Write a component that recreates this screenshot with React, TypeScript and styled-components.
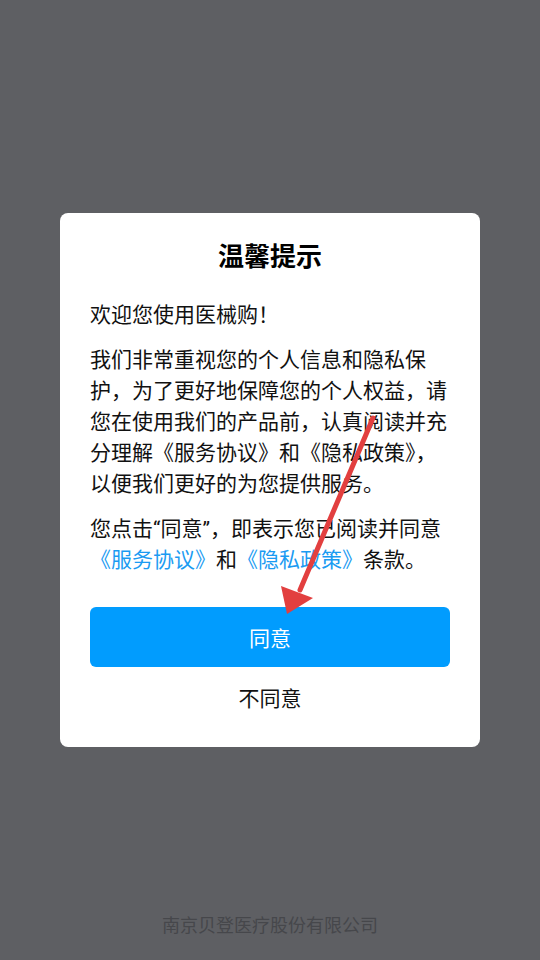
import styled, { createGlobalStyle } from "styled-components";

const GlobalStyle = createGlobalStyle`
  html, body {
    margin: 0;
    padding: 0;
  }
  body {
    font-family: Roboto, "Noto Sans CJK SC", sans-serif;
    -webkit-font-smoothing: antialiased;
  }
`;

function App() {
  return (
    <>
      <GlobalStyle />
      <StyledScreen>
        <StyledFooter>南京贝登医疗股份有限公司</StyledFooter>
      </StyledScreen>
      <StyledOverlay>
        <StyledDialog>
          <StyledTitle>温馨提示</StyledTitle>
          <StyledParagraph>欢迎您使用医械购！</StyledParagraph>
          <StyledParagraph>
            我们非常重视您的个人信息和隐私保护，为了更好地保障您的个人权益，请您在使用我们的产品前，认真阅读并充分理解《服务协议》和《隐私政策》，以便我们更好的为您提供服务。
          </StyledParagraph>
          <StyledParagraph>
            您点击“同意”，即表示您已阅读并同意
            <StyledLink>《服务协议》</StyledLink>和
            <StyledLink>《隐私政策》</StyledLink>条款。
          </StyledParagraph>
          <StyledActions>
            <StyledButton primary>同意</StyledButton>
            <StyledButton>不同意</StyledButton>
          </StyledActions>
        </StyledDialog>
      </StyledOverlay>
      <StyledArrow width="540" height="960" viewBox="0 0 540 960">
        <line
          x1="373"
          y1="418"
          x2="300"
          y2="590"
          stroke="#e23f3f"
          strokeWidth="5"
          strokeLinecap="round"
        />
        <polygon points="287,614 281,586 313,598" fill="#e23f3f" />
      </StyledArrow>
    </>
  );
}

export default App;

const StyledScreen = styled.div`
  height: 960px;
  background-color: #5e5f63;
  display: flex;
  flex-direction: column;
  justify-content: flex-end;
  align-items: center;
`;

const StyledFooter = styled.div`
  font-size: 18px;
  line-height: 26px;
  color: #46474b;
  padding-bottom: 21px;
`;

const StyledOverlay = styled.div`
  position: fixed;
  inset: 0;
  display: flex;
  align-items: center;
  justify-content: center;
`;

const StyledDialog = styled.div`
  width: 420px;
  box-sizing: border-box;
  background-color: #fff;
  border-radius: 8px;
  padding: 26px 30px 20px 30px;
  display: flex;
  flex-direction: column;
`;

const StyledTitle = styled.h2`
  margin: 0 0 25px;
  font-size: 26px;
  line-height: 36px;
  font-weight: 700;
  text-align: center;
  color: #000;
`;

const StyledParagraph = styled.p`
  margin: 0 0 14px;
  font-size: 21px;
  line-height: 31px;
  color: #111;
  &:last-of-type {
    margin-bottom: 0;
  }
`;

const StyledLink = styled.span`
  color: #1a9bf2;
`;

const StyledActions = styled.div`
  margin-top: 31px;
  display: flex;
  flex-direction: column;
`;

const StyledButton = styled.button<{ primary?: boolean }>`
  height: 60px;
  border: 0;
  border-radius: 6px;
  font-family: inherit;
  font-size: 21px;
  cursor: pointer;
  background-color: ${(p) => (p.primary ? "#019cfe" : "transparent")};
  color: ${(p) => (p.primary ? "#fff" : "#111")};
`;

const StyledArrow = styled.svg`
  position: fixed;
  left: 0;
  top: 0;
  pointer-events: none;
`;
